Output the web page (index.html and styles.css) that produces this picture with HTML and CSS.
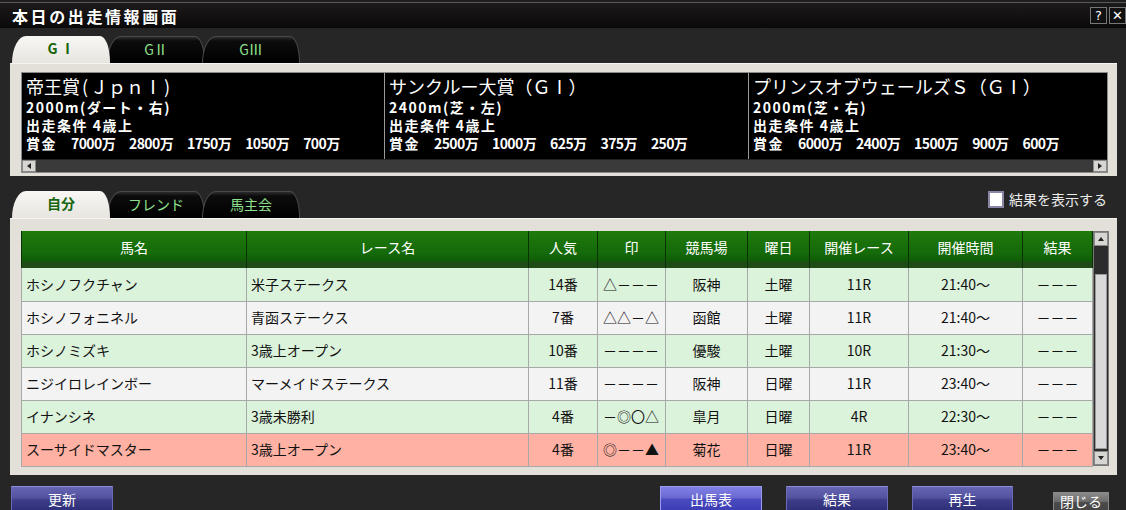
FILE: index.html
```html
<!DOCTYPE html>
<html lang="ja">
<head>
<meta charset="utf-8">
<title>本日の出走情報画面</title>
<link rel="stylesheet" href="styles.css">
</head>
<body>
<div class="win">
  <div class="titlebar">
    <div class="title">本日の出走情報画面</div>
    <div class="wbtns"><span class="wbtn">?</span><span class="wbtn">✕</span></div>
  </div>

  <div class="tabs tabs-top">
    <div class="tab active">G Ⅰ</div>
    <div class="tab">GⅡ</div>
    <div class="tab">GⅢ</div>
  </div>

  <div class="panel panel-races">
    <div class="racebox">
      <div class="racecols">
        <div class="race">
          <div class="rname">帝王賞<span class="np">(</span>ＪｐｎⅠ<span class="np">)</span></div>
          <div class="rline">2000m(ダート・右)</div>
          <div class="rline">出走条件 4歳上</div>
          <div class="rline prize">賞金<span class="pz">7000万</span><span class="pz">2800万</span><span class="pz">1750万</span><span class="pz">1050万</span><span class="pz">700万</span></div>
        </div>
        <div class="race">
          <div class="rname">サンクルー大賞（ＧⅠ）</div>
          <div class="rline">2400m(芝・左)</div>
          <div class="rline">出走条件 4歳上</div>
          <div class="rline prize">賞金<span class="pz">2500万</span><span class="pz">1000万</span><span class="pz">625万</span><span class="pz">375万</span><span class="pz">250万</span></div>
        </div>
        <div class="race">
          <div class="rname">プリンスオブウェールズＳ（ＧⅠ）</div>
          <div class="rline">2000m(芝・右)</div>
          <div class="rline">出走条件 4歳上</div>
          <div class="rline prize">賞金<span class="pz">6000万</span><span class="pz">2400万</span><span class="pz">1500万</span><span class="pz">900万</span><span class="pz">600万</span></div>
        </div>
      </div>
      <div class="hscroll">
        <span class="sbtn"><span class="tri tri-l"></span></span>
        <span class="sbtn"><span class="tri tri-r"></span></span>
      </div>
    </div>
  </div>

  <div class="tabrow">
    <div class="tabs">
      <div class="tab active">自分</div>
      <div class="tab">フレンド</div>
      <div class="tab">馬主会</div>
    </div>
    <label class="check"><span class="cbox"></span>結果を表示する</label>
  </div>

  <div class="panel panel-table">
    <div class="tablewrap">
      <table class="grid">
        <colgroup>
          <col class="c1"><col class="c2"><col class="c3"><col class="c4"><col class="c5"><col class="c6"><col class="c7"><col class="c8"><col class="c9">
        </colgroup>
        <thead>
          <tr><th>馬名</th><th>レース名</th><th>人気</th><th>印</th><th>競馬場</th><th>曜日</th><th>開催レース</th><th>開催時間</th><th>結果</th></tr>
        </thead>
        <tbody>
          <tr class="g"><td class="l">ホシノフクチャン</td><td class="l">米子ステークス</td><td>14番</td><td class="mk">△－－－</td><td>阪神</td><td>土曜</td><td>11R</td><td>21:40～</td><td>－－－</td></tr>
          <tr class="w"><td class="l">ホシノフォニネル</td><td class="l">青函ステークス</td><td>7番</td><td class="mk">△△－△</td><td>函館</td><td>土曜</td><td>11R</td><td>21:40～</td><td>－－－</td></tr>
          <tr class="g"><td class="l">ホシノミズキ</td><td class="l">3歳上オープン</td><td>10番</td><td class="mk">－－－－</td><td>優駿</td><td>土曜</td><td>10R</td><td>21:30～</td><td>－－－</td></tr>
          <tr class="w"><td class="l">ニジイロレインボー</td><td class="l">マーメイドステークス</td><td>11番</td><td class="mk">－－－－</td><td>阪神</td><td>日曜</td><td>11R</td><td>23:40～</td><td>－－－</td></tr>
          <tr class="g"><td class="l">イナンシネ</td><td class="l">3歳未勝利</td><td>4番</td><td class="mk">－◎〇△</td><td>皐月</td><td>日曜</td><td>4R</td><td>22:30～</td><td>－－－</td></tr>
          <tr class="p"><td class="l">スーサイドマスター</td><td class="l">3歳上オープン</td><td>4番</td><td class="mk">◎－－▲</td><td>菊花</td><td>日曜</td><td>11R</td><td>23:40～</td><td>－－－</td></tr>
        </tbody>
      </table>
      <div class="vscroll">
        <span class="vbtn"><span class="tri tri-u"></span></span>
        <span class="vtrack"><span class="vthumb"></span></span>
        <span class="vbtn"><span class="tri tri-d"></span></span>
      </div>
    </div>
  </div>

  <div class="buttons">
    <div class="btn b-update">更新</div>
    <div class="btn b-entry hot">出馬表</div>
    <div class="btn b-result">結果</div>
    <div class="btn b-play">再生</div>
    <div class="btn gray b-close">閉じる</div>
  </div>
</div>
</body>
</html>
```

FILE: styles.css
```css
* { box-sizing: border-box; }
html, body {
  margin: 0;
  padding: 0;
  background: #262626;
}
body {
  width: 1126px;
  height: 510px;
  overflow: hidden;
  font-family: "Noto Sans CJK JP", "Noto Sans", sans-serif;
  color: #111;
}
.win {
  width: 1126px;
  height: 510px;
  overflow: hidden;
}

/* title bar */
.titlebar {
  height: 28px;
  display: flex;
  align-items: center;
  justify-content: space-between;
  background: linear-gradient(#1e1e1e 0, #1e1e1e 2px, #5a5a5a 2px, #5a5a5a 3px, #1c1a1a 3px, #0a0808 100%);
}
.title {
  color: #fff;
  font-weight: bold;
  font-size: 16px;
  letter-spacing: 2.6px;
  padding-left: 12px;
  padding-top: 3px;
}
.wbtns {
  display: flex;
  gap: 2px;
  padding-top: 3px;
}
.wbtn {
  width: 17px;
  height: 17px;
  border: 1px solid #777;
  background: #111;
  color: #fff;
  font-family: "DejaVu Sans", sans-serif;
  font-size: 13px;
  line-height: 15px;
  text-align: center;
}

/* tabs */
.tabs {
  display: flex;
  padding-left: 12px;
  height: 27px;
  align-items: flex-end;
}
.tabs-top {
  margin-top: 8px;
}
.tab {
  width: 98px;
  height: 27px;
  margin-right: -3px;
  border: 1px solid #4a4a4a;
  border-bottom: none;
  border-radius: 14px 10px 0 0 / 27px 26px 0 0;
  background: linear-gradient(#2c2c2c 0, #0c0c0c 4px, #000 100%);
  color: #8fe08c;
  font-size: 14px;
  line-height: 25px;
  text-align: center;
}
.tab.active {
  border: none;
  background: linear-gradient(#f8f7f4, #e8e5e0);
  color: #17650e;
  font-weight: bold;
  font-size: 14px;
  position: relative;
  z-index: 2;
}

/* panels */
.panel {
  margin: 0 9px 0 10px;
  background: #e3dfd9;
  border-top: 1px solid #f6f4f0;
}
.panel-races {
  padding: 8px 9px 3px 11px;
  height: 113px;
}
.racebox {
  height: 101px;
  background: #000;
  border: 1px solid #8a8a8a;
  display: flex;
  flex-direction: column;
}
.racecols {
  flex: 1;
  display: grid;
  grid-template-columns: 362px 364px 1fr;
}
.race {
  padding: 1px 0 0 4px;
  color: #fff;
  border-left: 1px solid #9a9a9a;
  white-space: nowrap;
  overflow: hidden;
}
.race:first-child { border-left: none; }
.rname {
  font-size: 18px;
  line-height: 24px;
}
.np { padding: 0 2px; }
.rline {
  font-size: 14px;
  font-weight: bold;
  line-height: 18px;
  letter-spacing: 1.5px;
}
.prize { letter-spacing: 1.5px; }
.pz {
  margin-left: 14px;
  letter-spacing: -0.6px;
}
.hscroll {
  height: 13px;
  background: #3a3a3a;
  display: flex;
  justify-content: space-between;
  border-top: 1px solid #222;
}
.sbtn, .vbtn {
  width: 14px;
  height: 12px;
  background: #d8d6d2;
  border: 1px solid #888;
  display: flex;
  align-items: center;
  justify-content: center;
}
.tri { width: 0; height: 0; }
.tri-l { border-top: 3px solid transparent; border-bottom: 3px solid transparent; border-right: 4px solid #222; }
.tri-r { border-top: 3px solid transparent; border-bottom: 3px solid transparent; border-left: 4px solid #222; }
.tri-u { border-left: 3px solid transparent; border-right: 3px solid transparent; border-bottom: 4px solid #222; }
.tri-d { border-left: 3px solid transparent; border-right: 3px solid transparent; border-top: 4px solid #222; }

/* second tab row */
.tabrow {
  margin-top: 15px;
  display: flex;
  justify-content: space-between;
  align-items: flex-end;
}
.check {
  display: flex;
  align-items: center;
  gap: 5px;
  color: #ececec;
  font-size: 14px;
  margin-right: 19px;
  align-self: flex-start;
  line-height: 17px;
}
.cbox {
  width: 16px;
  height: 17px;
  background: #fff;
  border: 2px solid #8a86a8;
}

/* table panel */
.panel-table {
  padding: 12px 9px 9px 11px;
  height: 257px;
}
.tablewrap {
  display: flex;
}
.grid {
  border-collapse: collapse;
  table-layout: fixed;
  width: 1071px;
  font-size: 14px;
}
.c1 { width: 225px; } .c2 { width: 282px; } .c3 { width: 69px; } .c4 { width: 68px; }
.c5 { width: 82px; } .c6 { width: 62px; } .c7 { width: 99px; } .c8 { width: 114px; } .c9 { width: 70px; }
.grid th {
  height: 37px;
  padding: 0 0 6px 0;
  font-weight: normal;
  color: #fff;
  font-size: 14px;
  background: linear-gradient(#1f7a0c 0, #15690a 60%, #0f5a06 82%, #1f4b16 83%, #1f4b16 100%);
  border-right: 1px solid #0b3206;
  border-left: 1px solid #0b3206;
}
.grid td {
  height: 33px;
  padding: 0 0 1px 0;
  text-align: center;
  border: 1px solid #a8a8a8;
  border-top: none;
  white-space: nowrap;
  overflow: hidden;
}
.grid td.l { text-align: left; padding-left: 4px; }
.grid td.mk { text-align: left; padding-left: 5px; }
.grid tr.g td { background: #dbf2db; }
.grid tr.w td { background: #f3f3f3; }
.grid tr.p td { background: #ffb1a3; }

.vscroll {
  width: 16px;
  height: 235px;
  display: flex;
  flex-direction: column;
  background: #2c2c2c;
  border: 1px solid #777;
}
.vbtn { width: 14px; height: 14px; }
.vtrack {
  flex: 1;
  padding: 28px 1px 2px 1px;
  display: flex;
}
.vthumb {
  flex: 1;
  background: #d9d9d9;
  border: 1px solid #999;
}

/* bottom buttons */
.buttons {
  margin-top: 11px;
  display: flex;
  align-items: flex-start;
  padding-left: 11px;
}
.btn {
  width: 102px;
  height: 26px;
  color: #fff;
  font-size: 14px;
  text-align: center;
  line-height: 24px;
  border: 1px solid #6a6ab8;
  border-top-color: #8c8cd8;
  background: linear-gradient(#6565b4 0, #52529f 45%, #3c3c88 55%, #2e2e78 100%);
}
.btn.hot {
  background: linear-gradient(#8080e6 0, #6a6ad2 45%, #4a4ac0 55%, #3d3db5 100%);
  border-color: #9a9aee;
  border-bottom: 2px solid #9fe0f0;
}
.b-entry { margin-left: 547px; }
.b-result { margin-left: 24px; }
.b-play { margin-left: 24px; width: 101px; }
.btn.gray {
  width: 56px;
  margin-left: 40px;
  margin-top: 6px;
  height: 20px;
  line-height: 16px;
  border: 1px solid #888;
  background: linear-gradient(#8a8a8a 0, #6a6a6a 50%, #4c4c4c 51%, #444 100%);
}
```
